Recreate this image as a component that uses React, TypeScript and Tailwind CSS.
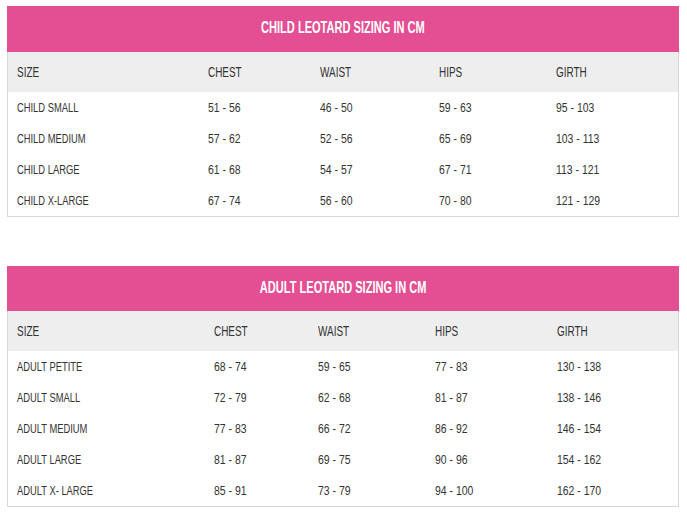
const CHILD_ROWS = [
  ["CHILD SMALL", "51 - 56", "46 - 50", "59 - 63", "95 - 103"],
  ["CHILD MEDIUM", "57 - 62", "52 - 56", "65 - 69", "103 - 113"],
  ["CHILD LARGE", "61 - 68", "54 - 57", "67 - 71", "113 - 121"],
  ["CHILD X-LARGE", "67 - 74", "56 - 60", "70 - 80", "121 - 129"],
];

const ADULT_ROWS = [
  ["ADULT PETITE", "68 - 74", "59 - 65", "77 - 83", "130 - 138"],
  ["ADULT SMALL", "72 - 79", "62 - 68", "81 - 87", "138 - 146"],
  ["ADULT MEDIUM", "77 - 83", "66 - 72", "86 - 92", "146 - 154"],
  ["ADULT LARGE", "81 - 87", "69 - 75", "90 - 96", "154 - 162"],
  ["ADULT X- LARGE", "85 - 91", "73 - 79", "94 - 100", "162 - 170"],
];

const HEADS = ["SIZE", "CHEST", "WAIST", "HIPS", "GIRTH"];

function SizeTable({
  title,
  rows,
  cols,
  titleHeight,
}: {
  title: string;
  rows: string[][];
  cols: string;
  titleHeight: string;
}) {
  return (
    <div className="w-[672px]">
      <div className={`${titleHeight} bg-[#e44e92] flex items-center justify-center pb-[3px]`}>
        <span className="inline-block scale-x-[0.65] text-[17px] font-bold text-white whitespace-nowrap">
          {title}
        </span>
      </div>
      <div className="border-x border-b border-[#d8d8d8]">
        <div className={`grid ${cols} h-[40px] items-center bg-[#eeeeee]`}>
          {HEADS.map((h) => (
            <div key={h} className="pl-[9px] pb-[1px]">
              <span className="inline-block origin-left scale-x-[0.71] text-[14px] text-[#333333] whitespace-nowrap">
                {h}
              </span>
            </div>
          ))}
        </div>
        {rows.map((r) => (
          <div key={r[0]} className={`grid ${cols} h-[31px] items-center bg-white`}>
            {r.map((c, i) => (
              <div key={i} className="pl-[9px] pb-[2px]">
                <span
                  className={
                    i === 0
                      ? "inline-block origin-left scale-x-[0.78] text-[12px] text-[#333333] whitespace-nowrap"
                      : "inline-block origin-left scale-x-[0.87] text-[12px] text-[#333333] whitespace-nowrap"
                  }
                >
                  {c}
                </span>
              </div>
            ))}
          </div>
        ))}
      </div>
    </div>
  );
}

export default function App() {
  return (
    <div className="w-[687px] h-[515px] bg-white pt-[6px] pl-[7px] font-['Liberation_Sans',Arial,sans-serif] leading-none">
      <SizeTable
        title="CHILD LEOTARD SIZING IN CM"
        rows={CHILD_ROWS}
        cols="grid-cols-[191px_112px_119px_117px_1fr]"
        titleHeight="h-[46px]"
      />
      <div className="mt-[49px]">
        <SizeTable
          title="ADULT LEOTARD SIZING IN CM"
          rows={ADULT_ROWS}
          cols="grid-cols-[197px_104px_117px_122px_1fr]"
          titleHeight="h-[45px]"
        />
      </div>
    </div>
  );
}
